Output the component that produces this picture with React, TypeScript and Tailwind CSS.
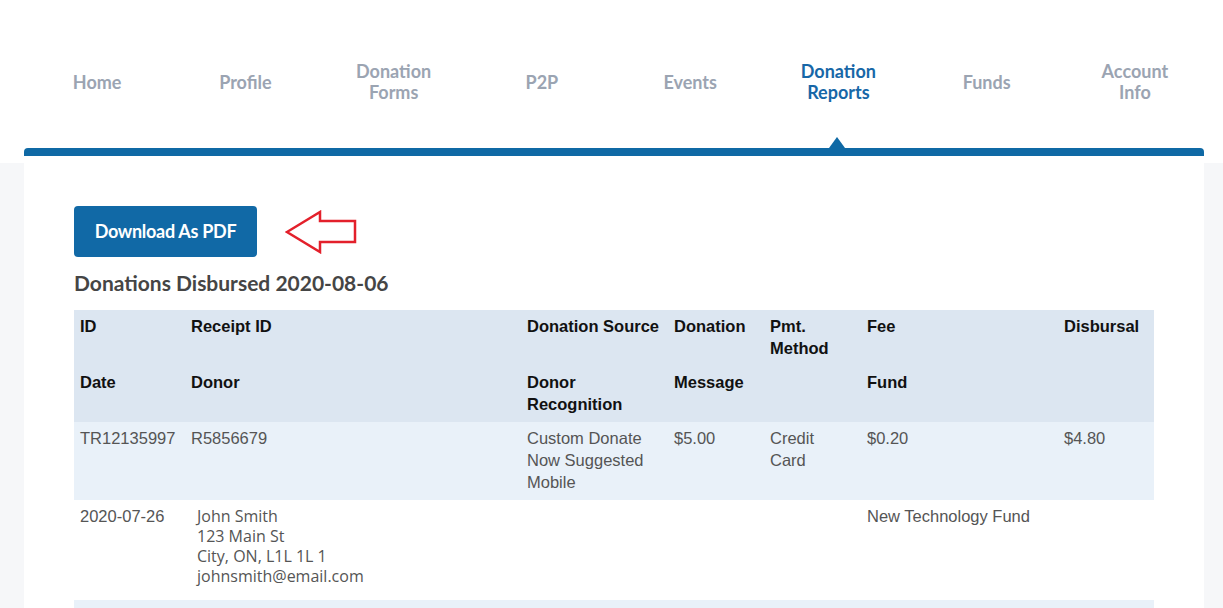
import React from "react";

const navItems: { label: React.ReactNode; active?: boolean }[] = [
  { label: "Home" },
  { label: "Profile" },
  { label: <>Donation<br />Forms</> },
  { label: "P2P" },
  { label: "Events" },
  { label: <>Donation<br />Reports</>, active: true },
  { label: "Funds" },
  { label: <>Account<br />Info</> },
];

const cols = "grid grid-cols-[111px_336px_147px_96px_97px_197px_96px]";

function Cell({ children, className = "" }: { children?: React.ReactNode; className?: string }) {
  return <div className={`px-[6px] ${className}`}>{children}</div>;
}

export default function App() {
  return (
    <div
      className="h-screen overflow-hidden bg-[#f6f7f9]"
      style={{ fontFamily: "Lato, 'Noto Sans', sans-serif" }}
    >
      <div className="bg-white h-[163px]">
        <nav className="ml-[23px] w-[1186px] grid grid-cols-8 h-[148px] pt-[16px]">
          {navItems.map((item, i) => (
            <div key={i} className="relative flex items-center justify-center">
              <span
                className={`text-center text-[18px] leading-[21px] font-bold ${
                  item.active ? "text-[#1767a7]" : "text-[#9ba4b2]"
                }`}
              >
                {item.label}
              </span>
              {item.active && (
                <svg
                  className="absolute bottom-0 left-1/2 translate-x-[-9px]"
                  width="16"
                  height="11"
                  viewBox="0 0 16 11"
                >
                  <polygon points="8,0 16,11 0,11" fill="#0f69a5" />
                </svg>
              )}
            </div>
          ))}
        </nav>
        <div className="ml-[24px] mr-[19px] h-[8px] bg-[#0f69a5] rounded-t-[4px]" />
      </div>
      <div className="ml-[24px] mr-[19px] bg-white pt-[43px] pl-[50px] pr-[50px] pb-10">
        <div className="flex items-center gap-[28px]">
          <button className="w-[183px] h-[51px] rounded-[4px] bg-[#1169a6] text-white text-[18px] font-bold tracking-[-0.3px]">
            Download As PDF
          </button>
          <svg width="74" height="44" viewBox="0 0 74 44" className="mt-[1px]">
            <polygon
              points="2,22 35,2 35,11 70,11 70,32 35,32 35,42"
              fill="white"
              stroke="#e3202b"
              strokeWidth="2.5"
              strokeLinejoin="miter"
            />
          </svg>
        </div>
        <h2 className="mt-[12px] text-[21px] leading-[28px] font-bold text-[#454545]">
          Donations Disbursed 2020-08-06
        </h2>
        <div
          className="mt-[13px] w-[1080px] text-[16.5px] leading-[22px]"
          style={{ fontFamily: "'Liberation Sans', Arial, sans-serif" }}
        >
          <div className="bg-[#dce6f1] font-bold text-[#111]">
            <div className={`${cols} pt-[5px] pb-[7px]`}>
              <Cell>ID</Cell>
              <Cell>Receipt ID</Cell>
              <Cell>Donation Source</Cell>
              <Cell>Donation</Cell>
              <Cell>Pmt.<br />Method</Cell>
              <Cell>Fee</Cell>
              <Cell>Disbursal</Cell>
            </div>
            <div className={`${cols} pt-[5px] pb-[7px]`}>
              <Cell>Date</Cell>
              <Cell>Donor</Cell>
              <Cell>Donor<br />Recognition</Cell>
              <Cell>Message</Cell>
              <Cell></Cell>
              <Cell>Fund</Cell>
              <Cell></Cell>
            </div>
          </div>
          <div className={`${cols} bg-[#e9f1f9] text-[#555] pt-[5px] pb-[7px]`}>
            <Cell>TR12135997</Cell>
            <Cell>R5856679</Cell>
            <Cell>Custom Donate<br />Now Suggested<br />Mobile</Cell>
            <Cell>$5.00</Cell>
            <Cell>Credit<br />Card</Cell>
            <Cell>$0.20</Cell>
            <Cell>$4.80</Cell>
          </div>
          <div className={`${cols} bg-white text-[#555] pt-[5px] h-[100px]`}>
            <Cell>2020-07-26</Cell>
            <Cell>
              <div
                className="pl-[6px] pt-[1px] text-[16px] leading-[20px] text-[#555]"
                style={{ fontFamily: "'Open Sans', 'Noto Sans', sans-serif" }}
              >
                John Smith<br />123 Main St<br />City, ON, L1L 1L 1<br />johnsmith@email.com
              </div>
            </Cell>
            <Cell></Cell>
            <Cell></Cell>
            <Cell></Cell>
            <Cell className="whitespace-nowrap">New Technology Fund</Cell>
            <Cell></Cell>
          </div>
          <div className="bg-[#e9f1f9] h-[60px]" />
        </div>
      </div>
    </div>
  );
}
